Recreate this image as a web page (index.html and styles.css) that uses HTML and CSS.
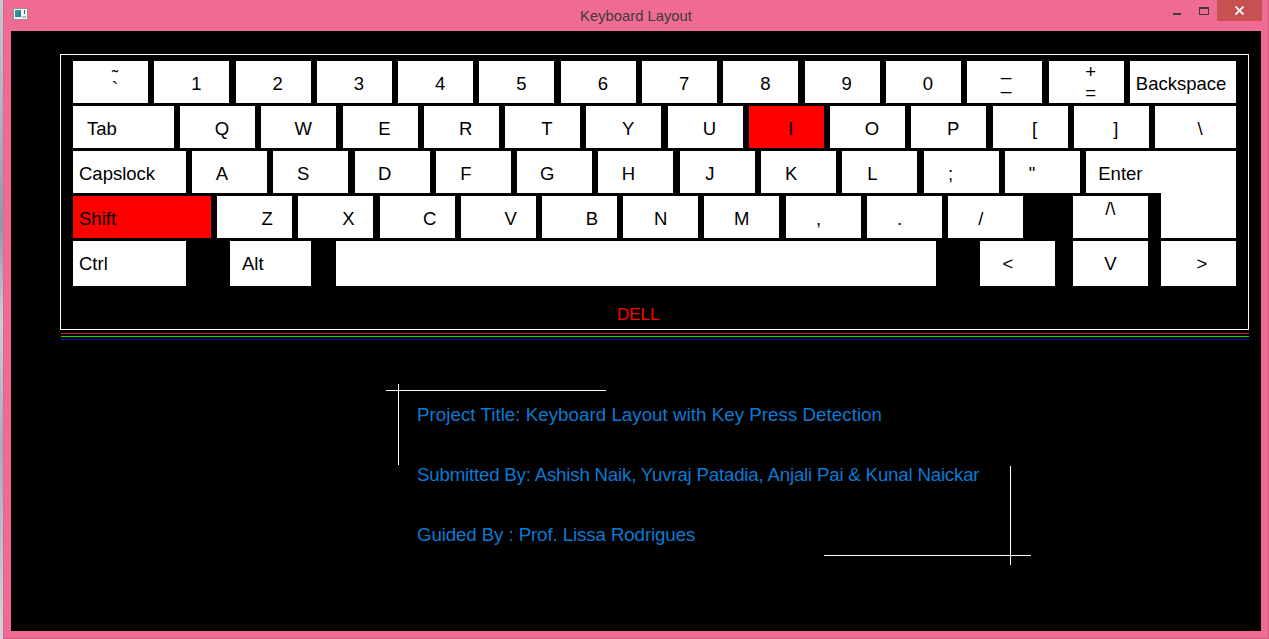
FILE: index.html
```html
<!DOCTYPE html>
<html lang="en">
<head>
<meta charset="utf-8">
<title>Keyboard Layout</title>
<link rel="stylesheet" href="styles.css">
</head>
<body>
<div class="screen">
  <div class="desk"></div>
  <div class="window">
    <div class="titlebar">
      <div class="tb-left">
        <svg class="app-icon" width="15" height="12" viewBox="0 0 15 12">
          <defs>
            <linearGradient id="ig" x1="0" y1="0" x2="1" y2="1">
              <stop offset="0" stop-color="#3aa37a"/>
              <stop offset="1" stop-color="#2d6fb8"/>
            </linearGradient>
          </defs>
          <rect x="0.5" y="0.5" width="14" height="11" fill="#f2f2f2" stroke="#8d949c"/>
          <rect x="2" y="2" width="6" height="7" fill="url(#ig)"/>
          <rect x="11" y="2" width="1" height="4" fill="#2b6f5c"/>
          <rect x="9" y="8" width="4" height="2" fill="#b9b9b9"/>
        </svg>
      </div>
      <div class="tb-title">Keyboard Layout</div>
      <div class="tb-controls">
        <span class="btn-min"></span>
        <span class="btn-max"></span>
        <span class="btn-close">
          <svg width="9" height="9" viewBox="0 0 9 9"><path d="M0.5 0.5 L8.5 8.5 M8.5 0.5 L0.5 8.5" stroke="#fff" stroke-width="1.8"/></svg>
        </span>
      </div>
    </div>
    <div class="client">
      <div class="kb-frame">
        <div class="row r1">
          <div class="key pl9 stack-key"><span class="stack tilde"><span>˜</span><span>`</span></span></div>
          <div class="key pl9">1</div>
          <div class="key pl9">2</div>
          <div class="key pl9">3</div>
          <div class="key pl9">4</div>
          <div class="key pl9">5</div>
          <div class="key pl9">6</div>
          <div class="key pl9">7</div>
          <div class="key pl9">8</div>
          <div class="key pl9">9</div>
          <div class="key pl9">0</div>
          <div class="key pl3 stack-key"><span class="stack under"><span>_</span><span>_</span></span></div>
          <div class="key pl9 stack-key"><span class="stack plus"><span>+</span><span>=</span></span></div>
          <div class="key w-back left">Backspace</div>
        </div>
        <div class="row r2">
          <div class="key w-tab left tab">Tab</div>
          <div class="key pl9">Q</div>
          <div class="key pl9">W</div>
          <div class="key pl9">E</div>
          <div class="key pl9">R</div>
          <div class="key pl9">T</div>
          <div class="key pl9">Y</div>
          <div class="key pl9">U</div>
          <div class="key pl9 pressed">I</div>
          <div class="key pl9">O</div>
          <div class="key pl9">P</div>
          <div class="key pl9">[</div>
          <div class="key pl9">]</div>
          <div class="key w-bslash pl9">\</div>
        </div>
        <div class="row r3">
          <div class="key w-caps left">Capslock</div>
          <div class="key pr15">A</div>
          <div class="key pr15">S</div>
          <div class="key pr15">D</div>
          <div class="key pr15">F</div>
          <div class="key pr15">G</div>
          <div class="key pr15">H</div>
          <div class="key pr15">J</div>
          <div class="key pr15">K</div>
          <div class="key pr15">L</div>
          <div class="key pr21">;</div>
          <div class="key pr21">"</div>
          <div class="key w-enter left enter">Enter</div>
        </div>
        <div class="row r4">
          <div class="key w-shift left pressed">Shift</div>
          <div class="key pl25">Z</div>
          <div class="key pl25">X</div>
          <div class="key pl25">C</div>
          <div class="key pl25">V</div>
          <div class="key pl25">B</div>
          <div class="key">N</div>
          <div class="key">M</div>
          <div class="key pr9">,</div>
          <div class="key pr9">.</div>
          <div class="key pr9">/</div>
          <div class="key up-key">/\</div>
          <div class="key enter-ext"></div>
        </div>
        <div class="row r5">
          <div class="key w-caps left">Ctrl</div>
          <div class="key w-alt left alt">Alt</div>
          <div class="key w-space"></div>
          <div class="key pr19 left-arrow">&lt;</div>
          <div class="key down-key">V</div>
          <div class="key pl7 right-arrow">&gt;</div>
        </div>
        <div class="brand">DELL</div>
      </div>
      <div class="rule red"></div>
      <div class="rule green"></div>
      <div class="rule blue"></div>
      <div class="info">
        <span class="hair h1"></span>
        <span class="hair v1"></span>
        <span class="hair v2"></span>
        <span class="hair h2"></span>
        <div class="info-lines">
          <p class="title-line">Project Title: Keyboard Layout with Key Press Detection</p>
          <p class="team-line">Submitted By: Ashish Naik, Yuvraj Patadia, Anjali Pai &amp; Kunal Naickar</p>
          <p class="guide-line">Guided By : Prof. Lissa Rodrigues</p>
        </div>
      </div>
    </div>
  </div>
</div>
</body>
</html>
```
FILE: styles.css
```css
html, body {
  margin: 0;
  padding: 0;
  background: #000;
}

body {
  font-family: "Liberation Sans", Arial, sans-serif;
}

.screen {
  display: flex;
  width: 1269px;
  height: 639px;
  overflow: hidden;
}

.desk {
  width: 3px;
  flex: none;
  background: linear-gradient(#c3c8cf 0, #aab1bb 20%, #8e98a6 35%, #c9ced5 50%, #a4adb8 70%, #d0d4da 100%);
}

.window {
  width: 1266px;
  flex: none;
  box-sizing: border-box;
  background: #f06b93;
  border-left: 1px solid #e2648b;
  border-right: 1px solid #d65a80;
  border-bottom: 1px solid #d65a80;
  display: flex;
  flex-direction: column;
}

/* ---------- title bar ---------- */
.titlebar {
  height: 31px;
  flex: none;
  display: grid;
  grid-template-columns: 1fr auto 1fr;
  align-items: start;
}

.tb-left {
  display: flex;
  padding: 8px 0 0 9px;
}

.app-icon {
  display: block;
}

.tb-title {
  font-family: "Liberation Sans", Arial, sans-serif;
  font-size: 14.8px;
  line-height: 32px;
  color: #3b3b3b;
}

.tb-controls {
  display: flex;
  justify-content: flex-end;
  align-items: flex-start;
  padding-right: 6px;
}

.btn-min {
  width: 8px;
  height: 2px;
  margin-top: 13px;
  background: #3a3a3a;
}

.btn-max {
  width: 10px;
  height: 8px;
  box-sizing: border-box;
  margin-top: 7px;
  margin-left: 18px;
  border: 1px solid #3a3a3a;
  border-top-width: 2px;
}

.btn-close {
  width: 45px;
  height: 21px;
  margin-left: 8px;
  background: #c75050;
  display: flex;
  align-items: center;
  justify-content: center;
}

.btn-close svg {
  display: block;
}

/* ---------- client ---------- */
.client {
  height: 600px;
  flex: none;
  margin: 0 7px;
  background: #000;
}

.kb-frame {
  width: 1189px;
  height: 276px;
  box-sizing: border-box;
  margin: 23px 0 0 49px;
  border: 1px solid #fff;
  padding: 6px 0 0 12px;
}

.row {
  display: flex;
  height: 42px;
  margin-bottom: 3px;
  gap: 6.3px;
}

.r2 { gap: 6.25px; }
.r4 { gap: 6.2px; }

.r5 {
  height: 45px;
  margin-bottom: 0;
  gap: 0;
}

.key {
  width: 75px;
  flex: none;
  box-sizing: border-box;
  background: #fff;
  color: #000;
  font-size: 18.5px;
  display: flex;
  align-items: center;
  justify-content: center;
  padding-top: 4px;
  white-space: nowrap;
}

.r5 .key { padding-top: 1px; }

.key.pressed { background: #ff0000; }

.key.left {
  justify-content: flex-start;
  padding-left: 6px;
}

.key.tab { padding-left: 14px; }
.key.enter { padding-left: 12px; }
.key.alt { padding-left: 12px; }

.pl3 { padding-left: 3px; }
.pl7 { padding-left: 7px; }
.pl9 { padding-left: 9px; }
.pl25 { padding-left: 25px; }
.pr9 { padding-right: 9px; }
.pr15 { padding-right: 15px; }
.pr19 { padding-right: 19px; }
.pr21 { padding-right: 21px; }

.w-back { width: 106px; }
.w-tab { width: 100.75px; }
.w-bslash { width: 81px; }
.w-caps { width: 113px; }
.r3 .w-caps { width: 112.7px; }
.w-enter { width: 149.7px; }
.w-shift { width: 138px; }
.w-alt { width: 81px; margin-left: 44px; }
.w-space { width: 600px; margin-left: 25px; }

.left-arrow { margin-left: 44px; }
.down-key { margin-left: 18px; }
.right-arrow { margin-left: 13px; }

.up-key {
  margin-left: 43.8px;
  align-items: flex-start;
  padding-top: 2px;
  line-height: 21px;
}

.enter-ext {
  margin-left: 6.8px;
  margin-top: -3px;
  height: 45px;
}

.stack-key {
  align-items: flex-start;
  padding-top: 0;
}

.stack {
  display: flex;
  flex-direction: column;
  align-items: center;
}

.stack.tilde {
  line-height: 12px;
  margin-top: 10px;
}

.stack.under {
  line-height: 14px;
  margin-top: 1px;
}

.stack.plus {
  line-height: 21px;
  margin-top: 0;
}

.brand {
  margin-top: 19px;
  padding-left: 544px;
  font-size: 17px;
  line-height: 20px;
  color: #ff0000;
}

.rule {
  height: 1px;
  width: 1188px;
  margin-left: 50px;
  margin-top: 2px;
}

.rule.red { background: #e01010; margin-top: 3px; }
.rule.green { background: #00e000; }
.rule.blue { background: #1010c8; }

/* ---------- project info ---------- */
.info {
  position: relative;
  margin: 44px 0 0 375px;
  width: 660px;
  height: 181px;
}

.hair {
  position: absolute;
  background: #fff;
}

.hair.h1 { left: 0; top: 6px; width: 220px; height: 1px; }
.hair.v1 { left: 12px; top: 0; width: 1px; height: 81px; }
.hair.v2 { left: 624px; top: 82px; width: 1px; height: 99px; }
.hair.h2 { left: 438px; top: 171px; width: 207px; height: 1px; }

.info-lines {
  display: flex;
  flex-direction: column;
  gap: 40px;
  padding: 21px 0 0 31px;
}

.info-lines p {
  margin: 0;
  font-size: 18.7px;
  line-height: 20px;
  color: #0b7ad2;
  white-space: nowrap;
}

.info-lines .title-line { letter-spacing: 0.05px; }
.info-lines .team-line { letter-spacing: -0.2px; }
.info-lines .guide-line { letter-spacing: -0.1px; }
```
